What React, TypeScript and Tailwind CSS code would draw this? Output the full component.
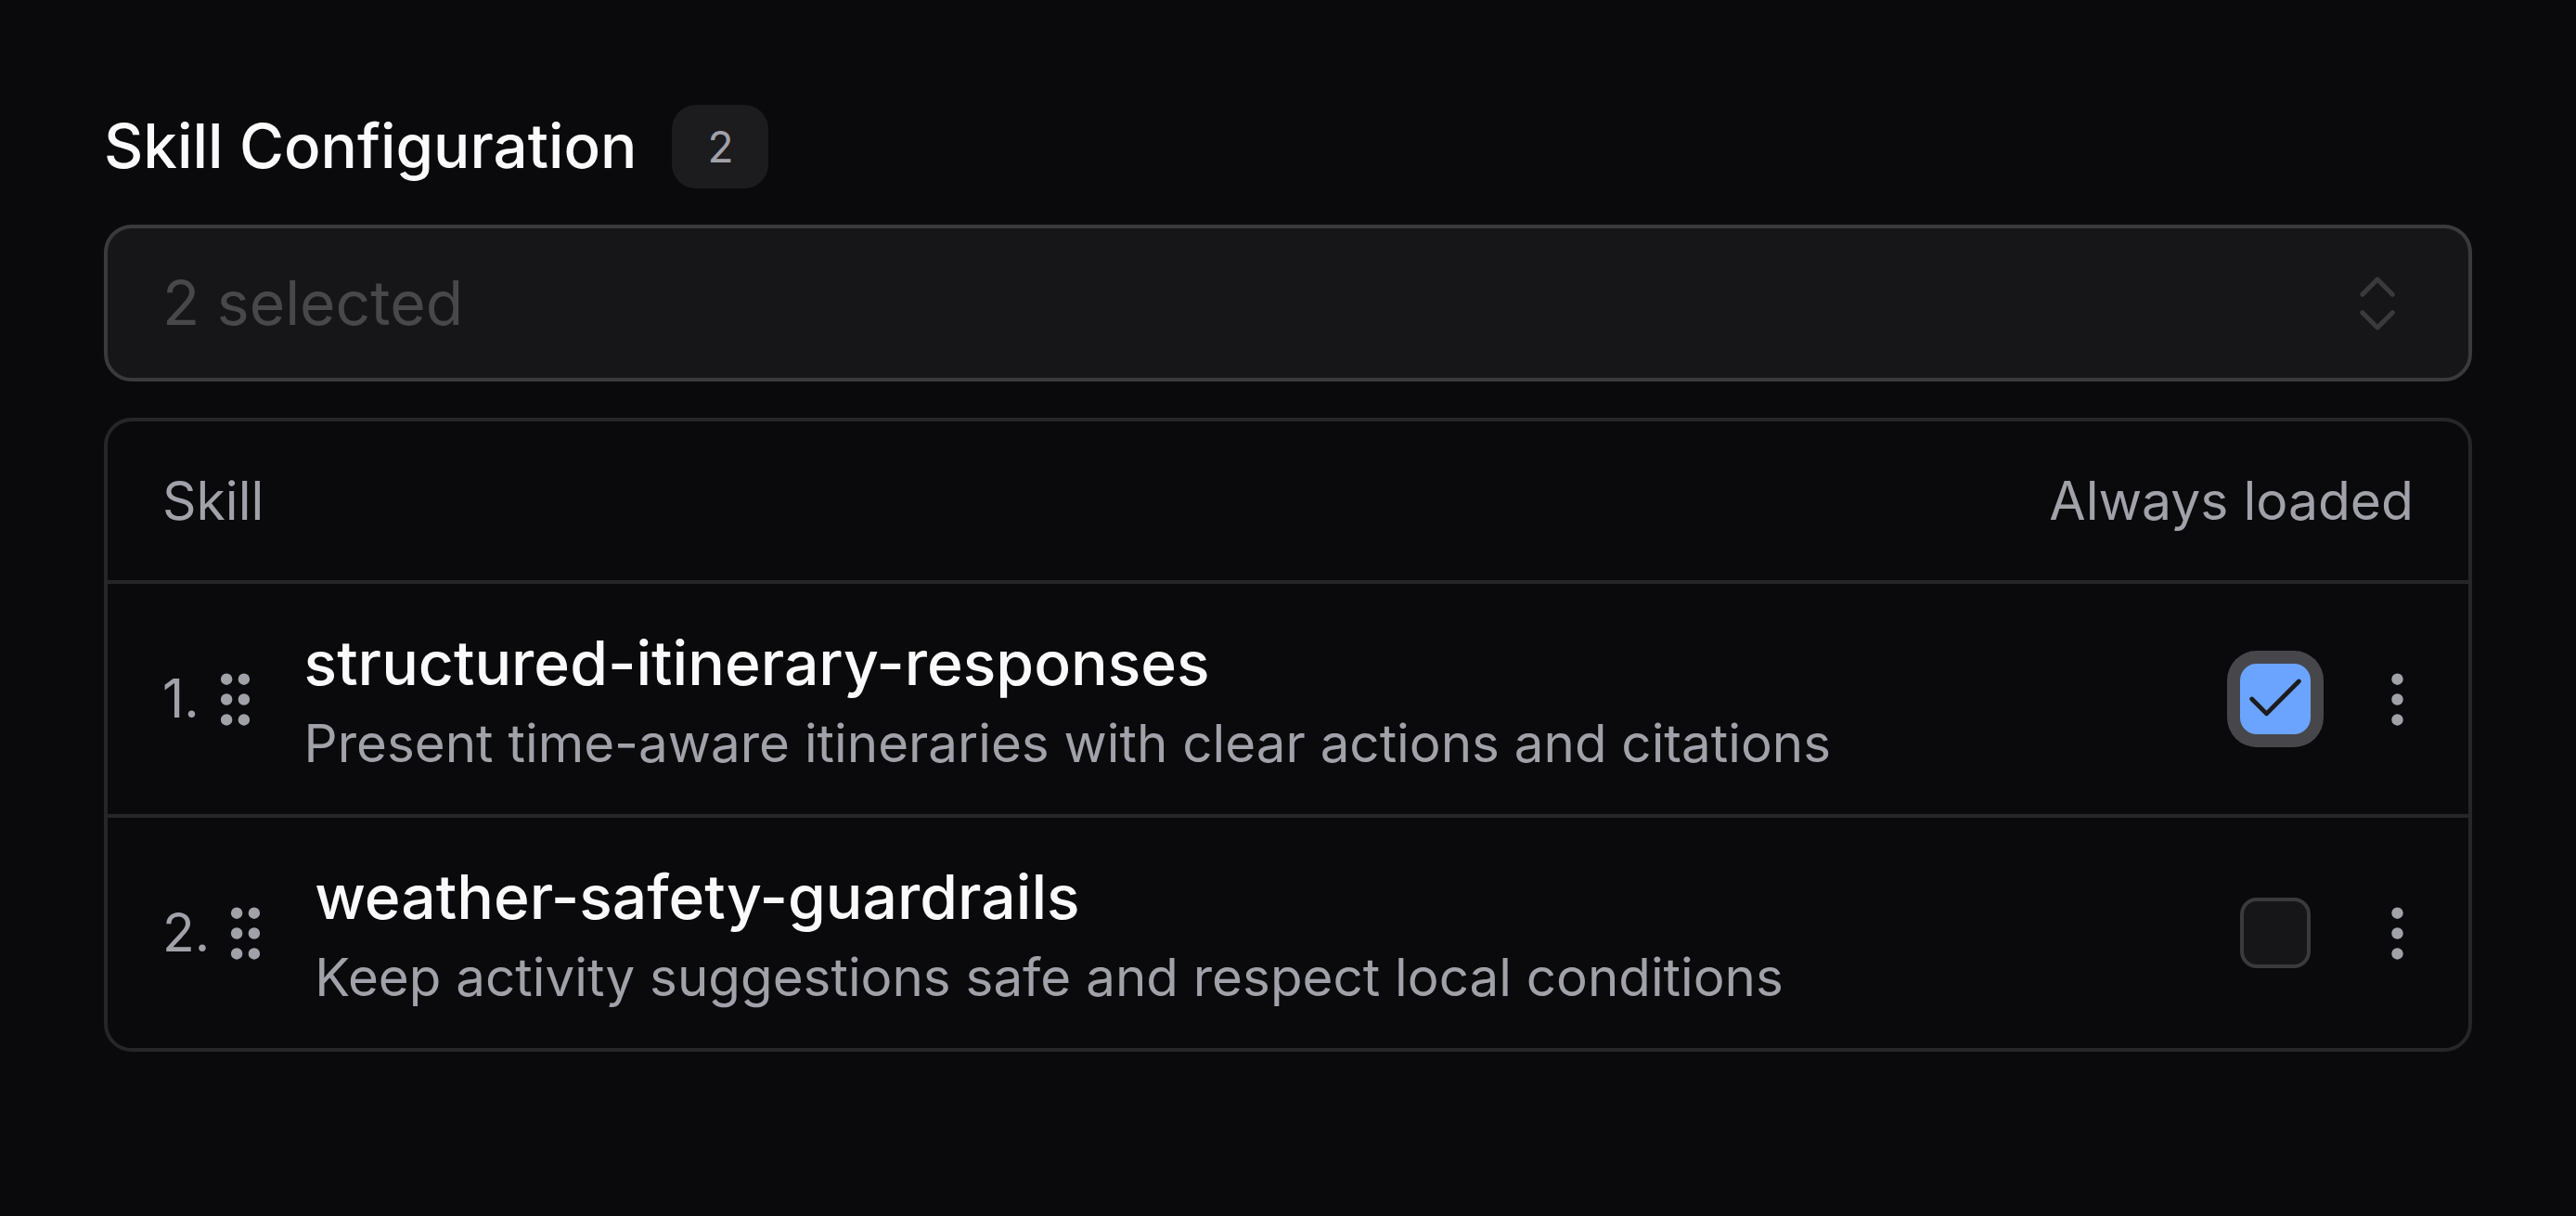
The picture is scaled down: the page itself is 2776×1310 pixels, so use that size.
import { Check, ChevronsUpDown, EllipsisVertical, GripVertical } from 'lucide-react';

interface Skill {
  name: string;
  description: string;
  alwaysLoaded: boolean;
}

const skills: Skill[] = [
  {
    name: 'structured-itinerary-responses',
    description: 'Present time-aware itineraries with clear actions and citations',
    alwaysLoaded: true,
  },
  {
    name: 'weather-safety-guardrails',
    description: 'Keep activity suggestions safe and respect local conditions',
    alwaysLoaded: false,
  },
];

export default function App() {
  return (
    <main
      className="min-h-screen bg-[#0a0a0c] px-[112px] pt-[113px]"
      style={{ fontFamily: 'Inter, "Noto Sans", sans-serif' }}
    >
      {/* HEADER */}
      <div className="flex items-center gap-[38px]">
        <h2 className="text-[65.5px] leading-[80px] font-medium text-[#fafafa]">
          Skill Configuration
        </h2>
        <span className="flex h-[90px] w-[104px] items-center justify-center rounded-[26px] bg-[#1c1c1f] text-[46px] text-[#a1a1aa]">
          {skills.length}
        </span>
      </div>

      {/* SELECT */}
      <button
        type="button"
        className="mt-[39px] flex h-[169px] w-full items-center justify-between rounded-[30px] border-4 border-[#3a3a3c] bg-[#161618] px-[59px]"
      >
        <span className="text-[66px] text-[#48484a]">2 selected</span>
        <ChevronsUpDown size={78} strokeWidth={1.6} color="#3a3a3c" />
      </button>

      {/* TABLE */}
      <div className="mt-[39px] rounded-[30px] border-4 border-[#262628]">
        <div className="flex h-[175px] items-center justify-between border-b-4 border-[#262628] px-[59px] text-[57px] text-[#a1a1aa]">
          <span>Skill</span>
          <span>Always loaded</span>
        </div>

        {skills.map((skill, i) => (
          <div
            key={skill.name}
            className={`flex h-[248px] items-center justify-between pl-[59px] pr-[39px] ${
              i < skills.length - 1 ? 'box-content border-b-4 border-[#262628]' : ''
            }`}
          >
            <div className="flex items-center">
              <span className="text-[57px] text-[#a1a1aa]">{i + 1}.</span>
              <GripVertical
                size={75}
                strokeWidth={2}
                color="#a1a1aa"
                className="ml-[1px] shrink-0"
              />
              <div className="ml-[37px] flex flex-col pt-[4px]">
                <span className="text-[66px] leading-[80px] font-medium text-[#fafafa]">
                  {skill.name}
                </span>
                <span className="mt-[12px] text-[56.5px] leading-[70px] text-[#a1a1aa]">
                  {skill.description}
                </span>
              </div>
            </div>

            <div className="flex items-center gap-[56px]">
              {skill.alwaysLoaded ? (
                <span className="flex h-[76px] w-[76px] items-center justify-center rounded-[18px] bg-[#6aa4ff] shadow-[0_0_0_14px_#47474b]">
                  <Check size={76} strokeWidth={1.5} color="#1c1c1e" />
                </span>
              ) : (
                <span className="h-[76px] w-[76px] rounded-[18px] border-4 border-[#3a3a3c] bg-[#161618]" />
              )}
              <EllipsisVertical size={75} strokeWidth={2} color="#a1a1aa" />
            </div>
          </div>
        ))}
      </div>
    </main>
  );
}
